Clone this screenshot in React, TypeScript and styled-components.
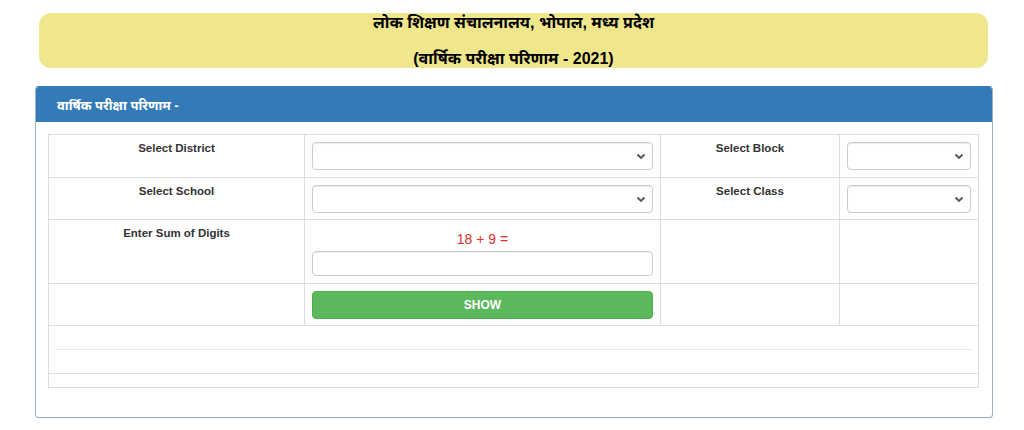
import React, { useState } from 'react';
import styled, { createGlobalStyle } from 'styled-components';

const GlobalStyle = createGlobalStyle`
  html, body {
    margin: 0;
    padding: 0;
    background: #fff;
  }
  body {
    font-family: "Liberation Sans", Arial, "Noto Sans", sans-serif;
    font-size: 12px;
    color: #333;
  }
  * {
    box-sizing: border-box;
  }
`;

const Page = styled.div`
  width: 1024px;
  height: 430px;
  padding: 13px 0 0 35px;
`;

const Banner = styled.div`
  margin-left: 4px;
  width: 949px;
  height: 55px;
  background: #f0e68c;
  border-radius: 12px;
  display: flex;
  flex-direction: column;
  align-items: center;
`;

const BannerLine = styled.div<{ $top: number }>`
  margin-top: ${(p) => p.$top}px;
  font-family: "Liberation Sans", "Noto Sans", sans-serif;
  font-weight: bold;
  font-size: 16px;
  line-height: 18px;
  color: #000;
`;

const Panel = styled.div`
  margin-top: 18px;
  width: 958px;
  height: 332px;
  border: 1px solid #96b4cc;
  border-top-color: #337ab7;
  border-radius: 4px;
  box-shadow: 0 1px 1px rgba(0, 0, 0, 0.05);
  overflow: hidden;
`;

const PanelHeading = styled.div`
  height: 35px;
  background: #337ab7;
  color: #fff;
  font-weight: bold;
  font-size: 13px;
  padding: 0 0 0 21px;
  display: flex;
  align-items: center;
`;

const PanelBody = styled.div`
  padding: 12px 13px 0 12px;
`;

const Table = styled.table`
  width: 930px;
  border-collapse: collapse;
  border: 1px solid #ddd;
  table-layout: fixed;
`;

const Cell = styled.td<{ $h?: number }>`
  border: 1px solid #ddd;
  padding: 7px 7px 6px 7px;
  vertical-align: top;
  height: ${(p) => (p.$h ? `${p.$h}px` : 'auto')};
`;

const Label = styled.div`
  text-align: center;
  font-weight: bold;
  font-size: 11.5px;
  color: #333;
  line-height: 13px;
`;

const SelectWrap = styled.div`
  position: relative;
  height: 28px;
  border: 1px solid #ccc;
  border-radius: 4px;
  background: #fff;
  box-shadow: inset 0 1px 1px rgba(0, 0, 0, 0.075);
`;

const Chevron = styled.svg`
  position: absolute;
  right: 6px;
  top: 10px;
`;

const HiddenSelect = styled.select`
  appearance: none;
  width: 100%;
  height: 100%;
  border: none;
  background: transparent;
  outline: none;
`;

const Question = styled.div`
  text-align: center;
  color: #d9322c;
  font-size: 14px;
  line-height: 16px;
  margin: 4px 0 4px 0;
`;

const TextInput = styled.input`
  display: block;
  width: 100%;
  height: 25px;
  border: 1px solid #ccc;
  border-radius: 4px;
  box-shadow: inset 0 1px 1px rgba(0, 0, 0, 0.075);
  outline: none;
`;

const ShowButton = styled.button`
  display: block;
  width: 100%;
  height: 28px;
  border: 1px solid #4cae4c;
  border-radius: 4px;
  background: #5cb85c;
  color: #fff;
  font-family: "Liberation Sans", Arial, sans-serif;
  font-weight: bold;
  font-size: 12px;
  cursor: pointer;
`;

const InnerLine = styled.div`
  height: 17px;
  border-bottom: 1px solid #e6e6e6;
`;

const Select: React.FC = () => (
  <SelectWrap>
    <HiddenSelect />
    <Chevron width="10" height="7" viewBox="0 0 10 7">
      <path d="M1.5 1.5 L5 5 L8.5 1.5" fill="none" stroke="#555" strokeWidth="1.8" />
    </Chevron>
  </SelectWrap>
);

const App: React.FC = () => {
  const [sum, setSum] = useState('');

  return (
    <>
      <GlobalStyle />
      <Page>
        <Banner>
          <BannerLine $top={1}>लोक शिक्षण संचालनालय, भोपाल, मध्य प्रदेश</BannerLine>
          <BannerLine $top={18}>(वार्षिक परीक्षा परिणाम - 2021)</BannerLine>
        </Banner>

        <Panel>
          <PanelHeading>वार्षिक परीक्षा परिणाम -</PanelHeading>
          <PanelBody>
            <Table>
              <colgroup>
                <col style={{ width: 256 }} />
                <col style={{ width: 356 }} />
                <col style={{ width: 179 }} />
                <col style={{ width: 139 }} />
              </colgroup>
              <tbody>
                <tr>
                  <Cell $h={43}>
                    <Label>Select District</Label>
                  </Cell>
                  <Cell>
                    <Select />
                  </Cell>
                  <Cell>
                    <Label>Select Block</Label>
                  </Cell>
                  <Cell>
                    <Select />
                  </Cell>
                </tr>
                <tr>
                  <Cell $h={42}>
                    <Label>Select School</Label>
                  </Cell>
                  <Cell>
                    <Select />
                  </Cell>
                  <Cell>
                    <Label>Select Class</Label>
                  </Cell>
                  <Cell>
                    <Select />
                  </Cell>
                </tr>
                <tr>
                  <Cell $h={64}>
                    <Label>Enter Sum of Digits</Label>
                  </Cell>
                  <Cell>
                    <Question>18 + 9 =</Question>
                    <TextInput value={sum} onChange={(e) => setSum(e.target.value)} />
                  </Cell>
                  <Cell />
                  <Cell />
                </tr>
                <tr>
                  <Cell $h={42} />
                  <Cell>
                    <ShowButton type="button">SHOW</ShowButton>
                  </Cell>
                  <Cell />
                  <Cell />
                </tr>
                <tr>
                  <Cell colSpan={4} $h={48}>
                    <InnerLine />
                  </Cell>
                </tr>
                <tr>
                  <Cell colSpan={4} $h={14} style={{ padding: 0 }} />
                </tr>
              </tbody>
            </Table>
          </PanelBody>
        </Panel>
      </Page>
    </>
  );
};

export default App;
